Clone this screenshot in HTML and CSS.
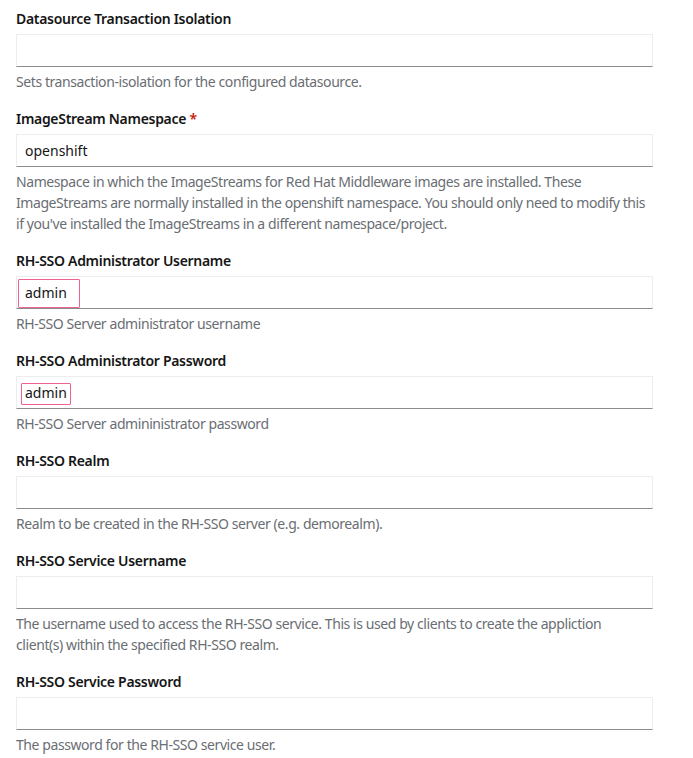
FILE: index.html
```html
<!DOCTYPE html>
<html>
<head>
<meta charset="utf-8">
<link rel="stylesheet" href="styles.css">
</head>
<body>
<form class="form">
  <div class="group">
    <label class="label">Datasource Transaction Isolation</label>
    <div class="input"></div>
    <div class="helper">Sets transaction-isolation for the configured datasource.</div>
  </div>
  <div class="group">
    <label class="label">ImageStream Namespace <span class="req">*</span></label>
    <div class="input">openshift</div>
    <div class="helper">Namespace in which the ImageStreams for Red Hat Middleware images are installed. These ImageStreams are normally installed in the openshift namespace. You should only need to modify this if you've installed the ImageStreams in a different namespace/project.</div>
  </div>
  <div class="group">
    <label class="label">RH-SSO Administrator Username</label>
    <div class="input">admin<span class="mark mark-user"></span></div>
    <div class="helper">RH-SSO Server administrator username</div>
  </div>
  <div class="group">
    <label class="label">RH-SSO Administrator Password</label>
    <div class="input">admin<span class="mark mark-pass"></span></div>
    <div class="helper">RH-SSO Server admininistrator password</div>
  </div>
  <div class="group">
    <label class="label">RH-SSO Realm</label>
    <div class="input"></div>
    <div class="helper">Realm to be created in the RH-SSO server (e.g. demorealm).</div>
  </div>
  <div class="group">
    <label class="label">RH-SSO Service Username</label>
    <div class="input"></div>
    <div class="helper">The username used to access the RH-SSO service. This is used by clients to create the appliction<br>client(s) within the specified RH-SSO realm.</div>
  </div>
  <div class="group">
    <label class="label">RH-SSO Service Password</label>
    <div class="input"></div>
    <div class="helper">The password for the RH-SSO service user.</div>
  </div>
</form>
</body>
</html>
```

FILE: styles.css
```css
html, body {
  margin: 0;
  padding: 0;
  background: #ffffff;
}
body {
  font-family: "Noto Sans", "Liberation Sans", sans-serif;
  font-size: 14px;
  color: #151515;
}
.form {
  padding: 8px 40px 0 16px;
  display: flex;
  flex-direction: column;
  gap: 16px;
}
.group {
  display: flex;
  flex-direction: column;
}
.label {
  display: block;
  font-weight: 600;
  font-size: 14px;
  line-height: 21px;
  color: #151515;
  margin-bottom: 5px;
  letter-spacing: -0.3px;
}
.req {
  color: #c9190b;
}
.input {
  position: relative;
  box-sizing: border-box;
  height: 33px;
  width: 637px;
  border: 1px solid #ededed;
  border-bottom-color: #8a8d90;
  padding: 0 8px;
  line-height: 31px;
  font-size: 14px;
  color: #151515;
}
.helper {
  margin-top: 4px;
  font-size: 14px;
  line-height: 21px;
  color: #6a6e73;
  letter-spacing: -0.42px;
  width: 637px;
}
.mark {
  position: absolute;
  border: 1px solid #f06292;
  border-radius: 1px;
  box-sizing: border-box;
}
.mark-user {
  left: 1px;
  top: 2px;
  width: 62px;
  height: 29px;
}
.mark-pass {
  left: 4px;
  top: 6px;
  width: 50px;
  height: 22px;
}
```
